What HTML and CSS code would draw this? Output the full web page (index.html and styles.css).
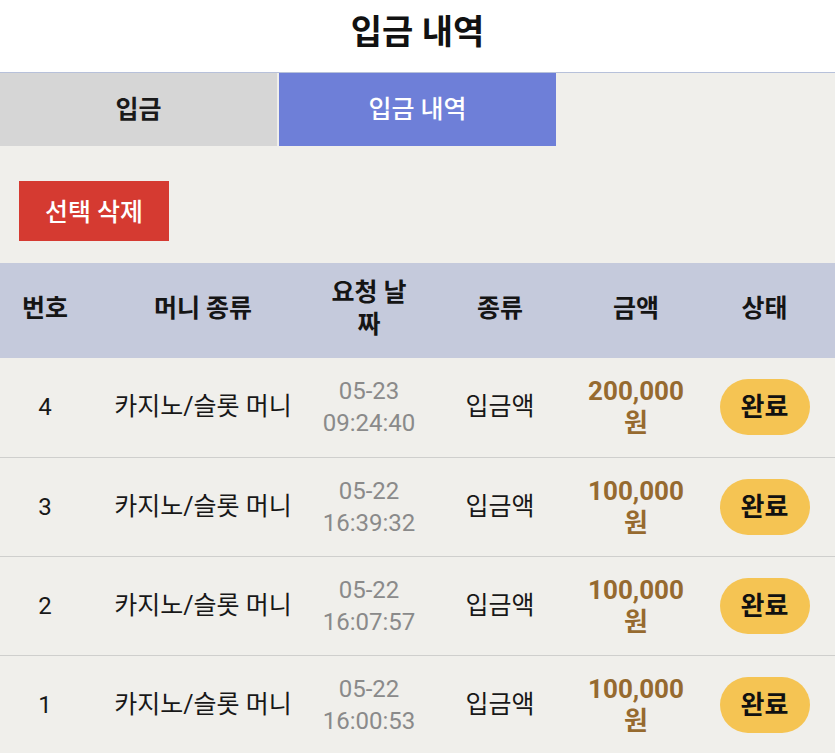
FILE: index.html
```html
<!DOCTYPE html>
<html lang="ko">
<head>
<meta charset="utf-8">
<title>입금 내역</title>
<link rel="stylesheet" href="styles.css">
</head>
<body>
<header class="topbar"><h1 class="title">입금 내역</h1></header>
<nav class="tabs">
  <div class="tab">입금</div>
  <div class="tab tab-active">입금 내역</div>
  <div class="tab-rest"></div>
</nav>
<main class="content">
  <div class="actions"><button class="btn-delete">선택 삭제</button></div>
  <table class="list">
    <colgroup>
      <col class="c1"><col class="c2"><col class="c3"><col class="c4"><col class="c5"><col class="c6">
    </colgroup>
    <thead>
      <tr><th>번호</th><th>머니 종류</th><th>요청 날<br>짜</th><th>종류</th><th>금액</th><th>상태</th></tr>
    </thead>
    <tbody>
      <tr><td class="num">4</td><td>카지노/슬롯 머니</td><td class="date">05-23<br>09:24:40</td><td>입금액</td><td class="amt">200,000<br>원</td><td><span class="badge">완료</span></td></tr>
      <tr><td class="num">3</td><td>카지노/슬롯 머니</td><td class="date">05-22<br>16:39:32</td><td>입금액</td><td class="amt">100,000<br>원</td><td><span class="badge">완료</span></td></tr>
      <tr><td class="num">2</td><td>카지노/슬롯 머니</td><td class="date">05-22<br>16:07:57</td><td>입금액</td><td class="amt">100,000<br>원</td><td><span class="badge">완료</span></td></tr>
      <tr><td class="num">1</td><td>카지노/슬롯 머니</td><td class="date">05-22<br>16:00:53</td><td>입금액</td><td class="amt">100,000<br>원</td><td><span class="badge">완료</span></td></tr>
    </tbody>
  </table>
</main>
</body>
</html>
```
FILE: styles.css
```css
* { box-sizing: border-box; }
html, body { margin: 0; padding: 0; }
body {
  background: #f0efeb;
  font-family: Roboto, "Noto Sans CJK KR", sans-serif;
  color: #151515;
}
.topbar {
  background: #ffffff;
  height: 73px;
  border-bottom: 1px solid #b7c1da;
  display: flex;
  align-items: center;
  justify-content: center;
}
.title {
  margin: 0;
  font-size: 34px;
  font-weight: 700;
  color: #111;
  padding-bottom: 14px;
}
.tabs {
  display: flex;
  height: 73px;
}
.tab {
  width: 277px;
  background: #d6d6d6;
  display: flex;
  align-items: center;
  justify-content: center;
  padding-bottom: 5px;
  font-size: 25px;
  font-weight: 700;
  color: #1a1a1a;
}
.tab-active {
  margin-left: 2px;
  background: #6e7fd8;
  color: #ffffff;
  font-weight: 500;
}
.tab-rest { flex: 1; }
.content { padding-top: 35px; }
.actions { padding: 0 0 22px 19px; }
.btn-delete {
  width: 150px;
  height: 60px;
  border: none;
  background: #d53a31;
  color: #ffffff;
  font-family: Roboto, "Noto Sans CJK KR", sans-serif;
  font-size: 25px;
  font-weight: 500;
  padding: 0 0 3px;
}
.list {
  width: 100%;
  border-collapse: collapse;
  table-layout: fixed;
}
.c1 { width: 90px; }
.c2 { width: 226px; }
.c3 { width: 106px; }
.c4 { width: 156px; }
.c5 { width: 116px; }
.c6 { width: 141px; }
.list th {
  background: #c5cadc;
  height: 95px;
  font-size: 25px;
  font-weight: 700;
  color: #151515;
  line-height: 32px;
  text-align: center;
  padding: 0 0 3px;
}
.list td {
  height: 99px;
  border-bottom: 1px solid #cfcfcd;
  text-align: center;
  font-size: 25px;
  color: #181818;
  padding: 0;
  line-height: 32px;
}
.list tbody tr:last-child td { border-bottom: none; }
.list td.num { font-size: 24px; }
.list td.date { color: #8a8a8a; font-size: 24px; }
.list td.amt { color: #966a2f; font-weight: 700; font-size: 26px; }
.badge {
  display: inline-block;
  width: 90px;
  height: 56px;
  line-height: 56px;
  border-radius: 28px;
  background: #f5c453;
  color: #111;
  font-size: 26px;
  font-weight: 700;
}
```
